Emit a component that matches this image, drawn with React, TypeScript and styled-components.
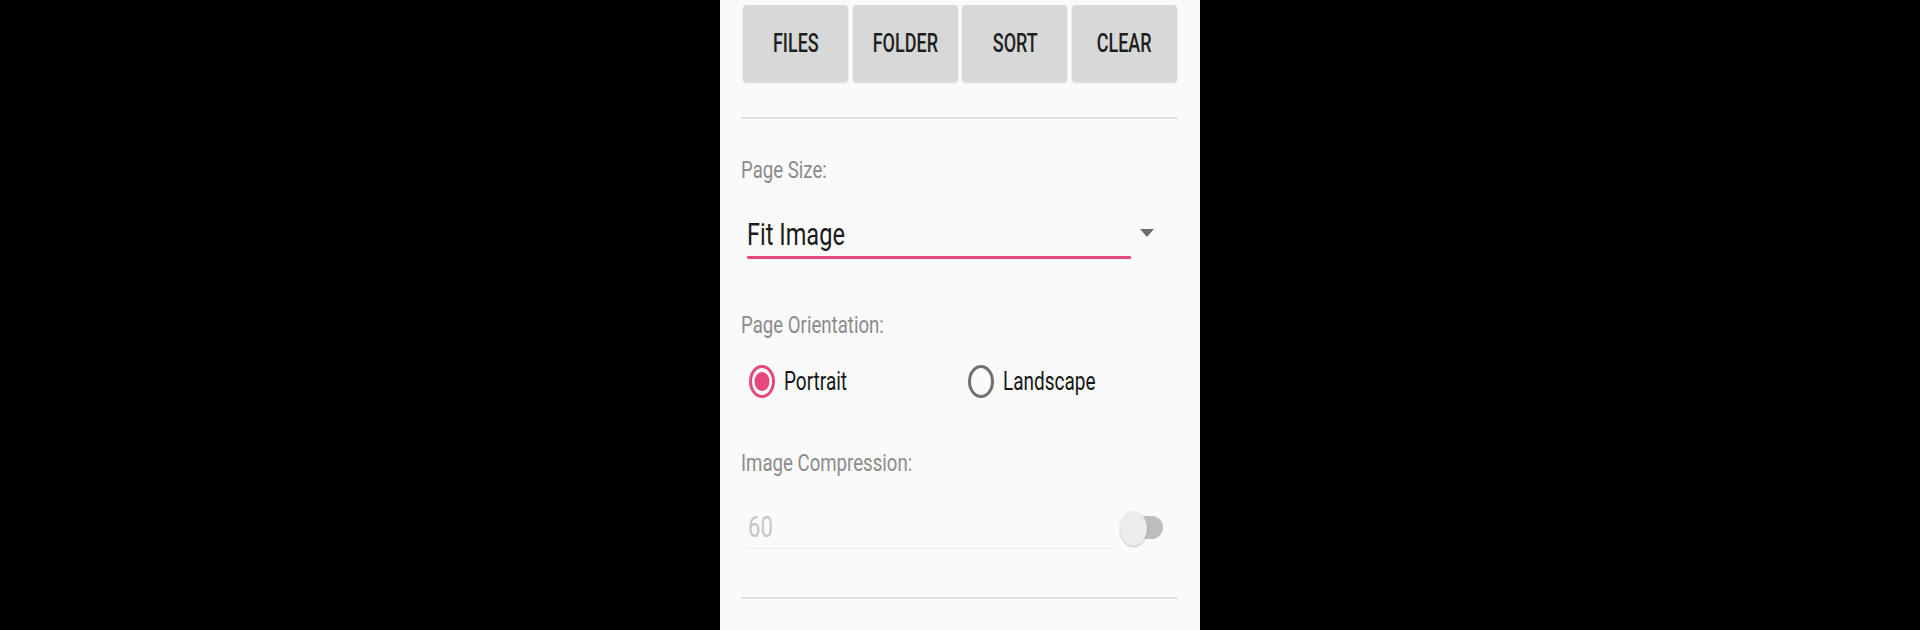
import styled, { createGlobalStyle } from 'styled-components';

const GlobalStyle = createGlobalStyle`
  html, body {
    margin: 0;
    padding: 0;
    background: #000;
  }
  #root {
    height: 630px;
    overflow: hidden;
  }
`;

const Screen = styled.div`
  width: 480px;
  height: 630px;
  margin: 0 auto;
  background: #fafafa;
  font-family: Roboto, 'Liberation Sans', sans-serif;
  padding: 0 22px 0 21px;
  box-sizing: border-box;
  display: flex;
  flex-direction: column;
`;

// the capture is squeezed sideways, so text gets the same squeeze
const Squeeze = styled.span<{ $origin?: string; $x?: number }>`
  display: inline-block;
  white-space: nowrap;
  transform: scaleX(${(p) => p.$x ?? 0.76});
  transform-origin: ${(p) => p.$origin ?? 'left center'};
`;

const ButtonRow = styled.div`
  display: grid;
  grid-template-columns: repeat(4, 105px);
  column-gap: 4.7px;
  margin: 5px 0 0 2px;
`;

const ActionButton = styled.button`
  height: 77px;
  border: none;
  border-radius: 4px;
  background: #d7d8d8;
  box-shadow: 0 1px 2px rgba(0, 0, 0, 0.14);
  font-family: Roboto, 'Liberation Sans', sans-serif;
  font-weight: 500;
  font-size: 25px;
  color: #1e1e1e;
  padding: 0;
  display: flex;
  align-items: center;
  justify-content: center;
`;

const Divider = styled.div<{ $gap: number }>`
  height: 2px;
  width: 437px;
  background: #e1e1e1;
  margin-top: ${(p) => p.$gap}px;
`;

const Label = styled.div<{ $gap: number }>`
  font-size: 23px;
  line-height: 22px;
  color: #8b8b8b;
  margin-top: ${(p) => p.$gap}px;
`;

const SelectRow = styled.div`
  display: flex;
  margin-top: 37.5px;
  padding-left: 6px;
`;

const SelectField = styled.div`
  width: 384px;
  display: flex;
  flex-direction: column;
`;

const SelectValue = styled.div`
  font-size: 31px;
  line-height: 31px;
  color: #1b1b1b;
`;

const AccentLine = styled.div`
  height: 3px;
  margin-top: 6px;
  background: #e6477d;
  border-radius: 1px;
`;

const DropArrow = styled.div`
  width: 0;
  height: 0;
  margin: 10px 0 0 9px;
  border-left: 7px solid transparent;
  border-right: 7px solid transparent;
  border-top: 8px solid #6c6c6c;
`;

const RadioRow = styled.div`
  display: grid;
  grid-template-columns: 219px auto;
  margin-top: 28px;
  padding-left: 8px;
`;

const RadioOption = styled.div`
  display: flex;
  align-items: center;
  height: 33px;
  gap: 9px;
`;

const RadioText = styled.div`
  font-size: 25px;
  line-height: 25px;
  color: #161616;
`;

const CompressionRow = styled.div`
  display: flex;
  align-items: flex-start;
  margin-top: 38px;
  padding-left: 4px;
`;

const NumberField = styled.div`
  width: 367px;
  display: flex;
  flex-direction: column;
`;

const NumberValue = styled.div`
  font-size: 29px;
  line-height: 29px;
  color: #c6c6c6;
  padding-left: 3px;
`;

const FaintLine = styled.div`
  height: 1px;
  margin-top: 6.5px;
  background: #ececec;
`;

const Switch = styled.div`
  position: relative;
  width: 43px;
  height: 35px;
  margin: -2px 0 0 8px;
`;

const SwitchTrack = styled.div`
  position: absolute;
  left: 10px;
  top: 5px;
  width: 33px;
  height: 23px;
  border-radius: 12px;
  background: #bdbdbd;
`;

const SwitchThumb = styled.div`
  position: absolute;
  left: 0;
  top: 0;
  width: 27px;
  height: 35px;
  border-radius: 50%;
  background: #ececec;
  box-shadow: 0 1px 2px rgba(0, 0, 0, 0.25);
`;

function Radio({ checked }: { checked: boolean }) {
  const color = checked ? '#e6477d' : '#707070';
  return (
    <svg width="26" height="33" viewBox="0 0 26 33">
      <ellipse cx="13" cy="16.5" rx="11.5" ry="15" fill="none" stroke={color} strokeWidth="3" />
      {checked && <ellipse cx="13" cy="16.5" rx="7.5" ry="9.5" fill={color} />}
    </svg>
  );
}

export default function App() {
  const buttons = ['FILES', 'FOLDER', 'SORT', 'CLEAR'];

  return (
    <>
      <GlobalStyle />
      <Screen>
        <ButtonRow>
          {buttons.map((b) => (
            <ActionButton key={b}>
              <Squeeze $origin="center" $x={0.72}>
                {b}
              </Squeeze>
            </ActionButton>
          ))}
        </ButtonRow>

        <Divider $gap={35} />

        <Label $gap={40.5}>
          <Squeeze $x={0.81}>Page Size:</Squeeze>
        </Label>
        <SelectRow>
          <SelectField>
            <SelectValue>
              <Squeeze>Fit Image</Squeeze>
            </SelectValue>
            <AccentLine />
          </SelectField>
          <DropArrow />
        </SelectRow>

        <Label $gap={55.5}>
          <Squeeze $x={0.81}>Page Orientation:</Squeeze>
        </Label>
        <RadioRow>
          <RadioOption>
            <Radio checked />
            <RadioText>
              <Squeeze>Portrait</Squeeze>
            </RadioText>
          </RadioOption>
          <RadioOption>
            <Radio checked={false} />
            <RadioText>
              <Squeeze>Landscape</Squeeze>
            </RadioText>
          </RadioOption>
        </RadioRow>

        <Label $gap={55}>
          <Squeeze $x={0.81}>Image Compression:</Squeeze>
        </Label>
        <CompressionRow>
          <NumberField>
            <NumberValue>
              <Squeeze>60</Squeeze>
            </NumberValue>
            <FaintLine />
          </NumberField>
          <Switch>
            <SwitchTrack />
            <SwitchThumb />
          </Switch>
        </CompressionRow>

        <Divider $gap={48} />
      </Screen>
    </>
  );
}
